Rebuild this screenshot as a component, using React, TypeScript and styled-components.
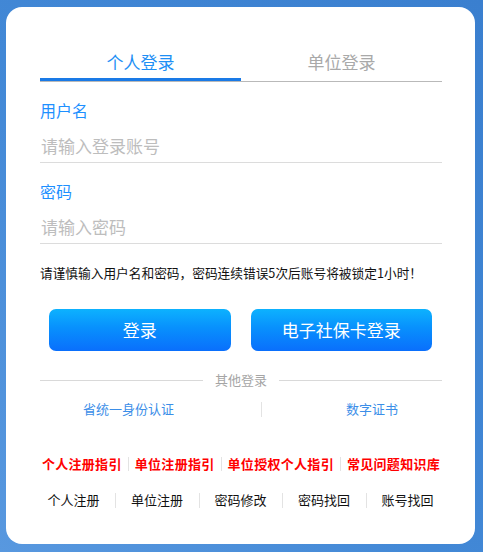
import styled, { createGlobalStyle } from "styled-components";

const GlobalStyle = createGlobalStyle`
  html, body {
    margin: 0;
    padding: 0;
  }
  body {
    width: 483px;
    height: 552px;
    overflow: hidden;
    background: linear-gradient(to top right, #5898df 0%, #4288d6 45%, #3a7fcf 100%);
    font-family: "Noto Sans CJK SC", "Liberation Sans", sans-serif;
  }
`;

const Page = styled.div`
  padding: 7px 8px 8px 6px;
`;

const Card = styled.div`
  width: 469px;
  height: 537px;
  box-sizing: border-box;
  background: #fff;
  border-radius: 16px;
  padding: 43px 33px 0 34px;
`;

const Tabs = styled.div`
  display: grid;
  grid-template-columns: 1fr 1fr;
  border-bottom: 1px solid #b9b9b9;
`;

const Tab = styled.div<{ $active?: boolean }>`
  text-align: center;
  font-size: 17px;
  line-height: 24px;
  padding-bottom: 4px;
  color: ${(p) => (p.$active ? "#1e8ff5" : "#a9a9a9")};
  border-bottom: 3px solid ${(p) => (p.$active ? "#1a7ae6" : "transparent")};
`;

const Field = styled.div`
  margin-top: 16px;
`;

const Label = styled.div`
  font-size: 16px;
  line-height: 24px;
  color: #1e90ff;
`;

const Input = styled.input`
  display: block;
  width: 100%;
  box-sizing: border-box;
  margin-top: 10px;
  height: 31px;
  padding: 0 0 4px 1px;
  border: none;
  border-bottom: 1px solid #dcdcdc;
  outline: none;
  font-family: inherit;
  font-size: 17px;
  color: #333;
  &::placeholder {
    color: #bdbdbd;
  }
`;

const Notice = styled.div`
  margin-top: 19px;
  font-size: 12.7px;
  line-height: 20px;
  color: #111;
`;

const ButtonRow = styled.div`
  display: flex;
  gap: 20px;
  padding: 0 10px 0 9px;
  margin-top: 26px;
`;

const Button = styled.button`
  flex: 1;
  height: 42px;
  border: none;
  border-radius: 7px;
  background: linear-gradient(to bottom, #0db2fe 0%, #0890fd 45%, #0a6ffc 100%);
  color: #fff;
  font-family: inherit;
  font-size: 17px;
  padding: 0 0 2px;
  cursor: pointer;
`;

const Divider = styled.div`
  display: flex;
  align-items: center;
  gap: 12px;
  margin-top: 19px;
  font-size: 13px;
  line-height: 20px;
  color: #a5a5a5;
  &::before,
  &::after {
    content: "";
    flex: 1;
    height: 1px;
    background: #d9d9d9;
  }
`;

const OtherRow = styled.div`
  display: grid;
  grid-template-columns: 221px 1px 1fr;
  align-items: center;
  margin-top: 9px;
  font-size: 13px;
  line-height: 20px;
`;

const OtherLink = styled.a<{ $side: "left" | "right" }>`
  text-align: center;
  color: #3b8ee8;
  text-decoration: none;
  ${(p) => (p.$side === "left" ? "padding-right: 44px;" : "padding-left: 40px;")}
`;

const VLine = styled.span<{ $h?: number }>`
  display: inline-block;
  width: 1px;
  height: ${(p) => p.$h ?? 14}px;
  background: #e3e3e3;
`;

const GuideRow = styled.div`
  display: flex;
  justify-content: center;
  align-items: center;
  margin-top: 35px;
  font-size: 13px;
  line-height: 20px;
`;

const GuideLink = styled.a`
  color: #ff0000;
  font-weight: 700;
  letter-spacing: 0.3px;
  text-decoration: none;
  white-space: nowrap;
`;

const GuideSep = styled(VLine)`
  margin: 0 6px;
`;

const ActionRow = styled.div`
  display: flex;
  justify-content: center;
  margin: 16px -8px 0 -9px;
  font-size: 13px;
  line-height: 20px;
`;

const Action = styled.a<{ $first?: boolean }>`
  width: 83.5px;
  text-align: center;
  color: #111;
  text-decoration: none;
  position: relative;
  &::before {
    content: "";
    display: ${(p) => (p.$first ? "none" : "block")};
    position: absolute;
    left: 0;
    top: 3px;
    width: 1px;
    height: 15px;
    background: #e3e3e3;
  }
`;

const guides = ["个人注册指引", "单位注册指引", "单位授权个人指引", "常见问题知识库"];
const actions = ["个人注册", "单位注册", "密码修改", "密码找回", "账号找回"];

export default function App() {
  return (
    <>
      <GlobalStyle />
      <Page>
        <Card>
          <Tabs>
            <Tab $active>个人登录</Tab>
            <Tab>单位登录</Tab>
          </Tabs>
          <Field>
            <Label>用户名</Label>
            <Input placeholder="请输入登录账号" />
          </Field>
          <Field>
            <Label>密码</Label>
            <Input type="password" placeholder="请输入密码" />
          </Field>
          <Notice>请谨慎输入用户名和密码，密码连续错误5次后账号将被锁定1小时！</Notice>
          <ButtonRow>
            <Button>登录</Button>
            <Button>电子社保卡登录</Button>
          </ButtonRow>
          <Divider>其他登录</Divider>
          <OtherRow>
            <OtherLink $side="left">省统一身份认证</OtherLink>
            <VLine $h={15} />
            <OtherLink $side="right">数字证书</OtherLink>
          </OtherRow>
          <GuideRow>
            {guides.map((g, i) => (
              <span key={g} style={{ display: "contents" }}>
                {i > 0 && <GuideSep />}
                <GuideLink>{g}</GuideLink>
              </span>
            ))}
          </GuideRow>
          <ActionRow>
            {actions.map((a, i) => (
              <Action key={a} $first={i === 0}>
                {a}
              </Action>
            ))}
          </ActionRow>
        </Card>
      </Page>
    </>
  );
}
